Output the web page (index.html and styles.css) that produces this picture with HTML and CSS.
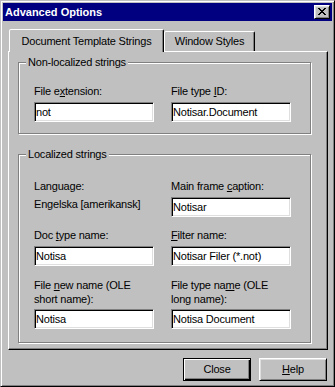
FILE: index.html
```html
<!DOCTYPE html>
<html lang="en">
<head>
    <meta charset="UTF-8">
    <meta name="viewport" content="width=device-width, initial-scale=1.0">
    <title>Advanced Options</title>
    <link rel="stylesheet" href="styles.css">
</head>
<body>

<div class="window">
    <div class="title-bar">
        <span class="title-text">Advanced Options</span>
        <button class="title-close" type="button" aria-label="Close">
            <svg width="8" height="7" viewBox="0 0 8 7"><path d="M0 0h2v1H0zM6 0h2v1H6zM1 1h2v1H1zM5 1h2v1H5zM2 2h4v1H2zM3 3h2v1H3zM2 4h4v1H2zM1 5h2v1H1zM5 5h2v1H5zM0 6h2v1H0zM6 6h2v1H6z"/></svg>
        </button>
    </div>

    <div class="window-body">
        <div class="tabs">
            <div class="tab tab-active">Document Template Strings</div>
            <div class="tab tab-other">Window Styles</div>
        </div>

        <div class="tab-panel">
            <div class="group group-nonlocal">
                <div class="group-title">Non-localized strings</div>
                <div class="fields">
                    <div class="field">
                        <label for="file-ext">File e<u>x</u>tension:</label>
                        <input type="text" id="file-ext" value="not">
                    </div>
                    <div class="field">
                        <label for="file-type-id">File type <u>I</u>D:</label>
                        <input type="text" id="file-type-id" value="Notisar.Document">
                    </div>
                </div>
            </div>

            <div class="group group-local">
                <div class="group-title">Localized strings</div>
                <div class="fields">
                    <div class="field">
                        <label>Language:</label>
                        <div class="field-value">Engelska [amerikansk]</div>
                    </div>
                    <div class="field">
                        <label for="main-caption">Main frame <u>c</u>aption:</label>
                        <input type="text" id="main-caption" value="Notisar">
                    </div>
                    <div class="field">
                        <label for="doc-type">Doc <u>t</u>ype name:</label>
                        <input type="text" id="doc-type" value="Notisa">
                    </div>
                    <div class="field">
                        <label for="filter-name"><u>F</u>ilter name:</label>
                        <input type="text" id="filter-name" value="Notisar Filer (*.not)">
                    </div>
                    <div class="field">
                        <label class="label-wrap" for="new-name">File <u>n</u>ew name (OLE<br>short name):</label>
                        <input type="text" id="new-name" value="Notisa">
                    </div>
                    <div class="field">
                        <label class="label-wrap" for="type-name">File type na<u>m</u>e (OLE<br>long name):</label>
                        <input type="text" id="type-name" value="Notisa Document">
                    </div>
                </div>
            </div>
        </div>

        <div class="buttons">
            <button class="btn btn-default" type="button">Close</button>
            <button class="btn" type="button"><u>H</u>elp</button>
        </div>
    </div>
</div>

</body>
</html>
```

FILE: styles.css
```css
* {
    box-sizing: border-box;
}

html, body {
    margin: 0;
}

body {
    background: #c0c0c0;
    font-family: "Liberation Sans", Arial, sans-serif;
    font-size: 11px;
    line-height: 13px;
    letter-spacing: -0.2px;
    color: #000;
}

button, input {
    font: inherit;
    letter-spacing: inherit;
    color: inherit;
    margin: 0;
}

/* window frame */
.window {
    width: 335px;
    height: 387px;
    border: 1px solid;
    border-color: #c0c0c0 #000 #000 #c0c0c0;
    box-shadow: inset 1px 1px #fff, inset -1px -1px #808080;
    padding: 2px;
    display: flex;
    flex-direction: column;
}

.title-bar {
    height: 18px;
    background: #000080;
    color: #fff;
    display: flex;
    align-items: center;
    justify-content: space-between;
    padding: 0 2px;
}

.title-text {
    font-weight: bold;
    letter-spacing: 0;
}

.title-close {
    width: 16px;
    height: 14px;
    padding: 2px 0 0 3px;
    border: 1px solid;
    border-color: #fff #000 #000 #fff;
    box-shadow: inset 1px 1px #dfdfdf, inset -1px -1px #808080;
    background: #c0c0c0;
    display: flex;
    align-items: flex-start;
}

.title-close svg {
    display: block;
}

.window-body {
    flex: 1;
    padding: 8px 4px 0 5px;
}

/* tabs */
.tabs {
    display: flex;
    align-items: flex-end;
    height: 22px;
    padding-left: 1px;
}

.tab {
    border: 1px solid;
    border-bottom: none;
    border-color: #fff #000 transparent #fff;
    border-radius: 2px 2px 0 0;
    box-shadow: inset -1px 0 #808080;
    background: #c0c0c0;
    text-align: center;
}

.tab-active {
    width: 155px;
    height: 23px;
    margin-bottom: -1px;
    padding-top: 5px;
    position: relative;
    z-index: 1;
}

.tab-other {
    width: 91px;
    height: 20px;
    padding-top: 3px;
}

.tab-panel {
    width: 320px;
    height: 299px;
    border: 1px solid;
    border-color: #fff #000 #000 #fff;
    box-shadow: inset -1px -1px #808080;
    padding: 10px 0 0 9px;
}

/* group boxes */
.group {
    width: 293px;
    border: 1px solid #808080;
    box-shadow: inset 1px 1px #fff, 1px 1px #fff;
    padding-left: 15px;
}

.group-title {
    width: fit-content;
    margin: -7px 0 0 -8px;
    padding: 0 2px;
    background: #c0c0c0;
}

.group-nonlocal {
    padding-bottom: 11px;
}

.group-nonlocal .fields {
    margin-top: 16px;
}

.group-local {
    margin-top: 20px;
    padding-bottom: 13px;
}

.group-local .fields {
    margin-top: 19px;
}

.fields {
    display: grid;
    grid-template-columns: 120px 120px;
    column-gap: 17px;
    row-gap: 12px;
}

.field label {
    display: block;
    margin-bottom: 4px;
}

.field .label-wrap {
    line-height: 14px;
    margin-bottom: 3px;
}

.field-value {
    padding-top: 1px;
}

.field input {
    display: block;
    width: 120px;
    height: 20px;
    padding: 0 1px;
    border: 1px solid;
    border-color: #808080 #fff #fff #808080;
    box-shadow: inset 1px 1px #000, inset -1px -1px #dfdfdf;
    background: #fff;
    outline: none;
}

/* dialog buttons */
.buttons {
    display: flex;
    justify-content: flex-end;
    gap: 8px;
    margin-top: 8px;
    padding-right: 1px;
}

.btn {
    width: 68px;
    height: 23px;
    padding: 0;
    border: 1px solid;
    border-color: #fff #000 #000 #fff;
    box-shadow: inset 1px 1px #dfdfdf, inset -1px -1px #808080;
    background: #c0c0c0;
}

.btn-default {
    border-color: #000;
    box-shadow: inset 1px 1px #fff, inset -1px -1px #000, inset -2px -2px #808080;
}
```
